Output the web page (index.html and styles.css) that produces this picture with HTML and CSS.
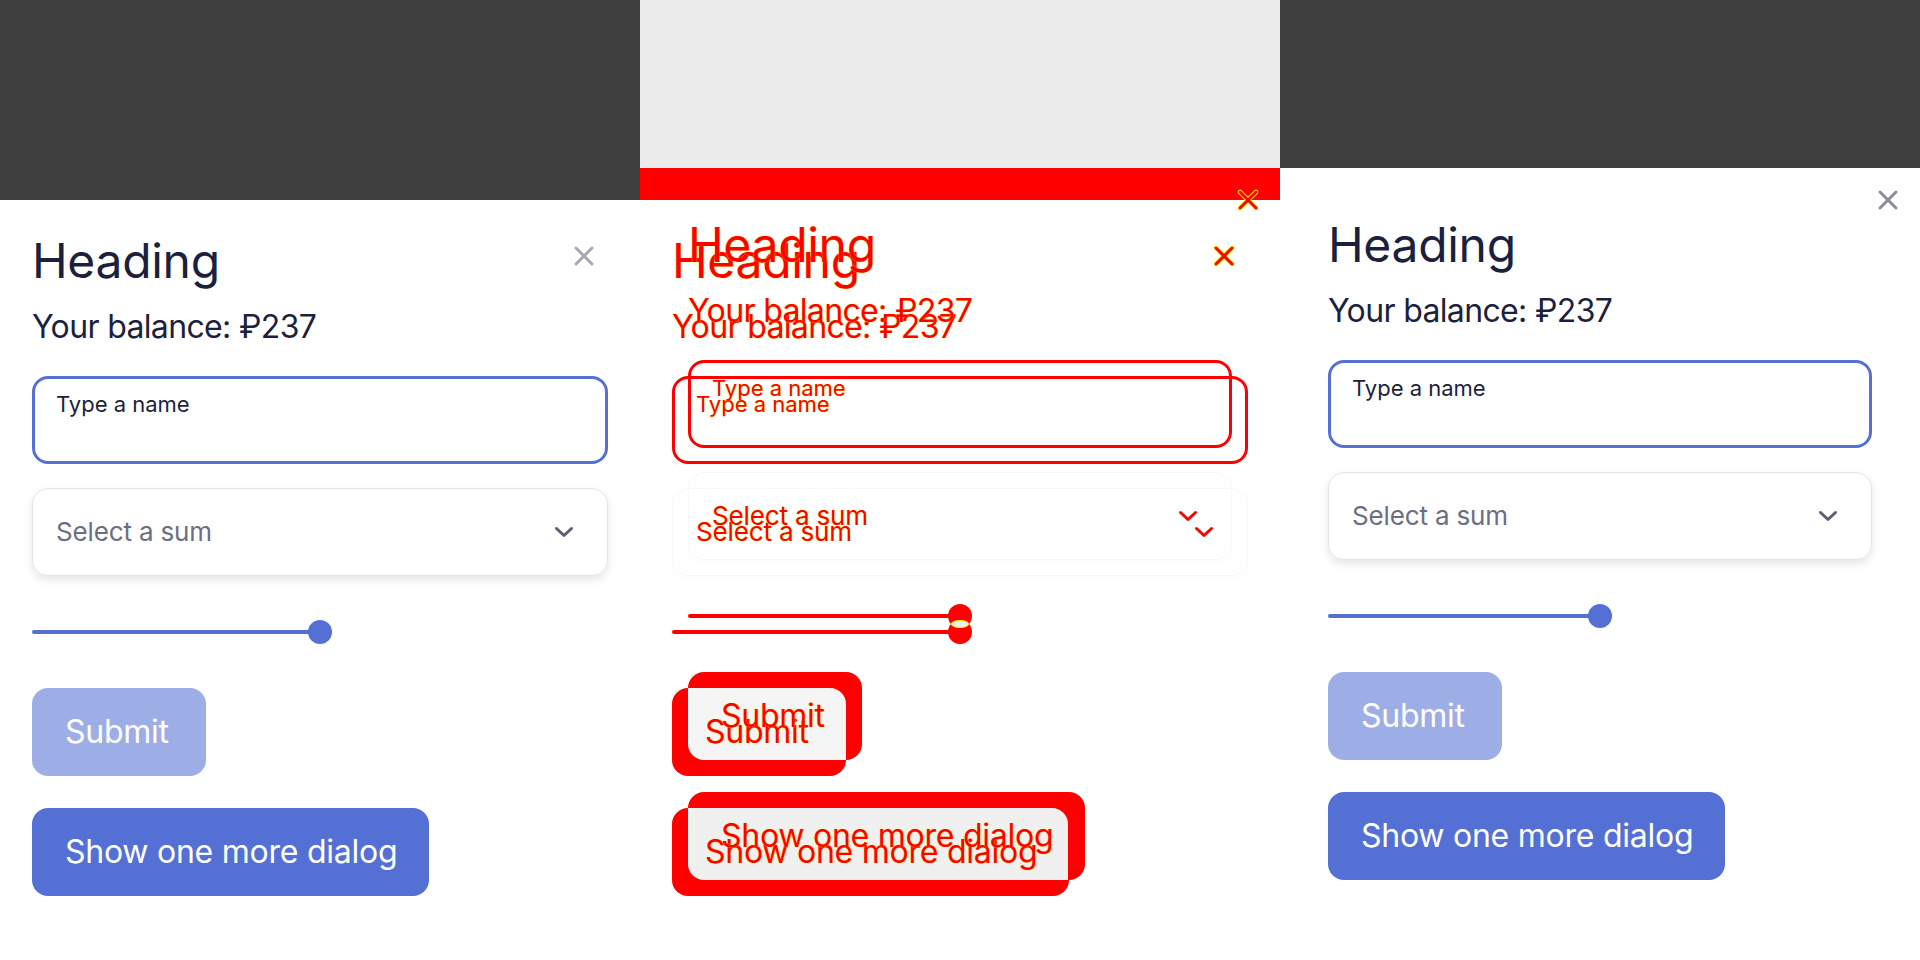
FILE: index.html
```html
<!DOCTYPE html>
<html lang="en">
<head>
<meta charset="utf-8">
<title>Dialog visual diff</title>
<link rel="stylesheet" href="styles.css">
</head>
<body>
  <!-- Expected -->
  <div class="panel">
    <div class="backdrop backdrop--a"></div>
    <section class="dialog dialog--a">
      <header class="dialog-head">
        <h1 class="title">Heading</h1>
        <button class="close" type="button" aria-label="Close"><svg class="close-icon" viewBox="0 0 20 20"><path class="edge" d="M2 2L18 18M18 2L2 18"/><path class="stroke" d="M2 2L18 18M18 2L2 18"/></svg></button>
      </header>
      <p class="balance">Your balance: ₽237</p>
      <div class="field"><span class="field-label">Type a name</span></div>
      <div class="select"><span class="select-text">Select a sum</span><svg class="chevron" viewBox="0 0 20 12"><path d="M2.5 2.5L10 9.5L17.5 2.5"/></svg></div>
      <div class="slider"><span class="slider-fill"></span><span class="slider-thumb"></span><span class="slider-rest"></span></div>
      <button class="btn btn--muted" type="button"><span class="btn-label">Submit</span></button>
      <button class="btn btn--next" type="button"><span class="btn-label">Show one more dialog</span></button>
    </section>
  </div>

  <!-- Diff -->
  <div class="panel panel--diff">
    <div class="diff-same"></div>
    <div class="diff-band"></div>
    <section class="dialog dialog--a">
      <header class="dialog-head">
        <h1 class="title">Heading</h1>
        <button class="close" type="button" aria-label="Close"><svg class="close-icon" viewBox="0 0 20 20"><path class="edge" d="M2 2L18 18M18 2L2 18"/><path class="stroke" d="M2 2L18 18M18 2L2 18"/></svg></button>
      </header>
      <p class="balance">Your balance: ₽237</p>
      <div class="field"><span class="field-label">Type a name</span></div>
      <div class="select"><span class="select-text">Select a sum</span><svg class="chevron" viewBox="0 0 20 12"><path d="M2.5 2.5L10 9.5L17.5 2.5"/></svg></div>
      <div class="slider"><span class="slider-fill"></span><span class="slider-thumb"></span><span class="slider-rest"></span></div>
      <button class="btn btn--muted" type="button"><span class="btn-label">Submit</span></button>
      <button class="btn btn--next" type="button"><span class="btn-label">Show one more dialog</span></button>
    </section>
    <section class="dialog dialog--b layer-b">
      <header class="dialog-head">
        <h1 class="title">Heading</h1>
      </header>
      <button class="close" type="button" aria-label="Close"><svg class="close-icon" viewBox="0 0 20 20"><path class="edge" d="M2 2L18 18M18 2L2 18"/><path class="stroke" d="M2 2L18 18M18 2L2 18"/></svg></button>
      <p class="balance">Your balance: ₽237</p>
      <div class="field"><span class="field-label">Type a name</span></div>
      <div class="select"><span class="select-text">Select a sum</span><svg class="chevron" viewBox="0 0 20 12"><path d="M2.5 2.5L10 9.5L17.5 2.5"/></svg></div>
      <div class="slider"><span class="slider-fill"></span><span class="slider-thumb"></span><span class="slider-rest"></span></div>
      <button class="btn btn--muted" type="button"><span class="btn-label">Submit</span></button>
      <button class="btn btn--next" type="button"><span class="btn-label">Show one more dialog</span></button>
    </section>
    <span class="same same--thumb"></span>
    <span class="same same--submit"></span>
    <span class="same same--next"></span>
  </div>

  <!-- Actual -->
  <div class="panel">
    <div class="backdrop backdrop--b"></div>
    <section class="dialog dialog--b">
      <header class="dialog-head">
        <h1 class="title">Heading</h1>
      </header>
      <button class="close" type="button" aria-label="Close"><svg class="close-icon" viewBox="0 0 20 20"><path class="edge" d="M2 2L18 18M18 2L2 18"/><path class="stroke" d="M2 2L18 18M18 2L2 18"/></svg></button>
      <p class="balance">Your balance: ₽237</p>
      <div class="field"><span class="field-label">Type a name</span></div>
      <div class="select"><span class="select-text">Select a sum</span><svg class="chevron" viewBox="0 0 20 12"><path d="M2.5 2.5L10 9.5L17.5 2.5"/></svg></div>
      <div class="slider"><span class="slider-fill"></span><span class="slider-thumb"></span><span class="slider-rest"></span></div>
      <button class="btn btn--muted" type="button"><span class="btn-label">Submit</span></button>
      <button class="btn btn--next" type="button"><span class="btn-label">Show one more dialog</span></button>
    </section>
  </div>
</body>
</html>
```

FILE: styles.css
```css
* {
  box-sizing: border-box;
  margin: 0;
  padding: 0;
}

body {
  margin: 0;
  width: 1920px;
  height: 960px;
  overflow: hidden;
  display: flex;
  background: #fff;
  font-family: Inter, "Noto Sans", sans-serif;
  color: #1c1f3d;
}

.panel {
  width: 640px;
  height: 960px;
  flex: none;
  display: flex;
  flex-direction: column;
  position: relative;
  overflow: hidden;
}

.backdrop {
  flex: none;
  background: #3f3f3f;
}

.backdrop--a { height: 200px; }
.backdrop--b { height: 168px; }

.dialog {
  flex: 1;
  display: flex;
  flex-direction: column;
  align-items: flex-start;
  background: #fff;
  position: relative;
}

.dialog--a { padding: 32px 32px 0; }
.dialog--b { padding: 48px 48px 0; }

.dialog-head {
  align-self: stretch;
  display: flex;
  justify-content: space-between;
  align-items: flex-start;
}

.title {
  font-size: 48px;
  line-height: 58px;
  font-weight: 400;
  letter-spacing: -0.3px;
}

.close {
  width: 48px;
  height: 48px;
  flex: none;
  display: flex;
  align-items: center;
  justify-content: center;
  border: 0;
  background: none;
  color: #a6a8b5;
}

.dialog--b .close {
  position: absolute;
  top: 8px;
  right: 8px;
  color: #8a8c9c;
}

.close-icon {
  width: 20px;
  height: 20px;
  overflow: visible;
}

.close-icon path {
  fill: none;
  stroke-linecap: round;
}

.close-icon .edge { stroke: none; }
.close-icon .stroke {
  stroke: currentColor;
  stroke-width: 3;
}

.balance {
  margin-top: 17px;
  font-size: 32px;
  line-height: 40px;
  letter-spacing: -0.65px;
}

.field {
  align-self: stretch;
  margin-top: 29px;
  height: 88px;
  border: 3px solid #5470d5;
  border-radius: 16px;
  padding: 12px 21px;
}

.field-label {
  display: block;
  font-size: 22px;
  line-height: 26px;
}

.select {
  align-self: stretch;
  margin-top: 24px;
  height: 88px;
  border: 1px solid #e4e4e6;
  border-radius: 16px;
  box-shadow: 0 4px 8px rgba(0, 0, 0, 0.1);
  display: flex;
  align-items: center;
  justify-content: space-between;
  padding: 0 33px 0 23px;
}

.select-text {
  font-size: 26px;
  line-height: 32px;
  color: #6b6e82;
  letter-spacing: -0.15px;
}

.chevron {
  width: 20px;
  height: 12px;
  flex: none;
}

.chevron path {
  fill: none;
  stroke: #5b5e72;
  stroke-width: 3;
  stroke-linecap: round;
  stroke-linejoin: round;
}

.slider {
  align-self: stretch;
  margin-top: 44px;
  height: 24px;
  display: grid;
  grid-template-columns: 1fr 24px 1fr;
  align-items: center;
}

.slider-fill {
  height: 4px;
  border-radius: 2px;
  background: #5470d5;
  margin-right: -12px;
}

.slider-thumb {
  width: 24px;
  height: 24px;
  border-radius: 50%;
  background: #5470d5;
}

.slider-rest {
  height: 4px;
  border-radius: 2px;
  background: #ebebeb;
  margin-left: -12px;
  position: relative;
  z-index: -1;
}

.btn {
  margin-top: 44px;
  height: 88px;
  padding: 0 32px 0 33px;
  border: 0;
  border-radius: 16px;
  background: #5470d5;
  color: #fff;
  font-family: inherit;
  font-size: 32px;
  line-height: 40px;
  letter-spacing: -0.25px;
  text-align: left;
}

.btn--muted {
  background: #9daee6;
  min-width: 174px;
}

.btn--next { margin-top: 32px; }

/* ---------- diff panel ---------- */

.diff-same {
  flex: none;
  height: 168px;
  background: #ececec;
}

.diff-band {
  flex: none;
  height: 32px;
  background: #ff0000;
}

.layer-b {
  position: absolute;
  top: 168px;
  left: 0;
  right: 0;
  bottom: 0;
  background: transparent;
}

.panel--diff .title,
.panel--diff .balance,
.panel--diff .field-label,
.panel--diff .select-text,
.panel--diff .btn-label {
  color: #ff0000;
  text-shadow: 0 0 1px #ffff00;
}

.panel--diff .btn-label {
  position: relative;
  z-index: 3;
}

.panel--diff .close { color: #ff0000; }
.panel--diff .close-icon .edge {
  stroke: #ffff00;
  stroke-width: 4.6;
}

.panel--diff .field { border-color: #ff0000; }

.panel--diff .select {
  border-color: #f7f7f7;
  box-shadow: 0 4px 8px rgba(0, 0, 0, 0.012);
}

.panel--diff .chevron path { stroke: #ff0000; }

.panel--diff .slider-fill,
.panel--diff .slider-thumb { background: #ff0000; }
.panel--diff .slider-rest { background: #fbfbfb; }

.panel--diff .btn { background: #ff0000; }

.same {
  position: absolute;
  z-index: 2;
}

.same--thumb {
  left: 311px;
  top: 620px;
  width: 18px;
  height: 8px;
  border-radius: 50%;
  background: #eeeeee;
  border: 1px solid #ffff00;
}

.same--submit {
  left: 48px;
  top: 688px;
  width: 158px;
  height: 72px;
  border-radius: 0 16px 0 16px;
  background: #f5f5f5;
}

.same--next {
  left: 48px;
  top: 808px;
  width: 380px;
  height: 72px;
  border-radius: 0 16px 0 16px;
  background: #f0f0f0;
}
```
